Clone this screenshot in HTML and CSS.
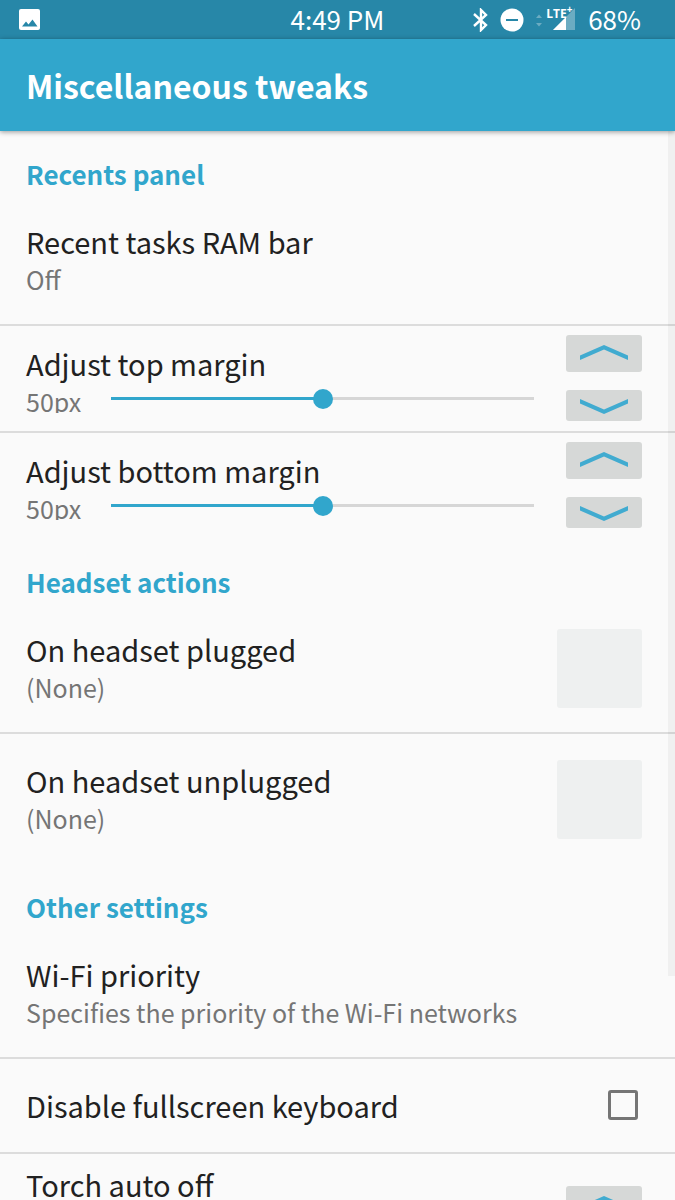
FILE: index.html
```html
<!DOCTYPE html>
<html lang="en">

<head>
  <meta charset="UTF-8">
  <meta name="viewport" content="width=device-width, initial-scale=1">
  <title>Miscellaneous tweaks</title>
  <link rel="stylesheet" href="styles.css">
</head>

<body>
  <div class="status-bar">
    <svg class="icon-picture" width="21" height="21" viewBox="0 0 21 21">
      <rect width="21" height="21" rx="2" fill="#fff"/>
      <path d="M3 17.500L7 12.500L9.500 15.500L13.500 10.500L18.500 17.500Z" fill="#2787a8"/>
    </svg>
    <span class="clock">4:49 PM</span>
    <div class="status-icons">
      <svg width="15" height="24" viewBox="0 0 15 24">
        <path d="M1 6L13 17L8 22V2L13 7L1 18" fill="none" stroke="#fff" stroke-width="2.400"/>
      </svg>
      <svg width="24" height="24" viewBox="0 0 24 24">
        <circle cx="12" cy="12" r="11.500" fill="#fff"/>
        <rect x="6" y="11" width="12" height="2" fill="#2787a8"/>
      </svg>
      <div class="signal">
        <svg width="40" height="24" viewBox="0 0 40 24">
          <path d="M0 10L3 6.500L6 10ZM0 15L3 18.500L6 15Z" fill="#6bacc2"/>
          <path d="M39 0V22H17Z" fill="#6bacc2"/>
          <path d="M30 9V22H17Z" fill="#fff"/>
        </svg>
        <span class="network">LTE<sup>+</sup></span>
      </div>
      <span class="battery">68%</span>
    </div>
  </div>

  <header class="toolbar">
    <h1>Miscellaneous tweaks</h1>
  </header>

  <main class="settings">
    <h2>Recents panel</h2>
    <div class="row">
      <div class="text">
        <div class="title">Recent tasks RAM bar</div>
        <div class="summary">Off</div>
      </div>
    </div>
    <div class="row row-slider">
      <div class="text">
        <label class="title" for="top_margin">Adjust top margin</label>
        <div class="slider">
          <output class="value" for="top_margin">50px</output>
          <input type="range" id="top_margin" min="0" max="100" value="50">
        </div>
      </div>
      <div class="stepper">
        <button class="up" aria-label="Increase top margin"><svg width="48" height="15" viewBox="0 0 48 15"><path d="M0 10.500L24 0L48 10.500V15L24 4.500L0 15Z"/></svg></button>
        <button class="down" aria-label="Decrease top margin"><svg width="48" height="15" viewBox="0 0 48 15"><path d="M0 0L24 10.500L48 0V4.500L24 15L0 4.500Z"/></svg></button>
      </div>
    </div>
    <div class="row row-slider">
      <div class="text">
        <label class="title" for="bottom_margin">Adjust bottom margin</label>
        <div class="slider">
          <output class="value" for="bottom_margin">50px</output>
          <input type="range" id="bottom_margin" min="0" max="100" value="50">
        </div>
      </div>
      <div class="stepper">
        <button class="up" aria-label="Increase bottom margin"><svg width="48" height="15" viewBox="0 0 48 15"><path d="M0 10.500L24 0L48 10.500V15L24 4.500L0 15Z"/></svg></button>
        <button class="down" aria-label="Decrease bottom margin"><svg width="48" height="15" viewBox="0 0 48 15"><path d="M0 0L24 10.500L48 0V4.500L24 15L0 4.500Z"/></svg></button>
      </div>
    </div>

    <h2>Headset actions</h2>
    <div class="row">
      <div class="text">
        <div class="title">On headset plugged</div>
        <div class="summary">(None)</div>
      </div>
      <button class="app-icon" aria-label="Choose action on headset plugged"></button>
    </div>
    <div class="row">
      <div class="text">
        <div class="title">On headset unplugged</div>
        <div class="summary">(None)</div>
      </div>
      <button class="app-icon" aria-label="Choose action on headset unplugged"></button>
    </div>

    <h2>Other settings</h2>
    <div class="row">
      <div class="text">
        <div class="title">Wi-Fi priority</div>
        <div class="summary">Specifies the priority of the Wi-Fi networks</div>
      </div>
    </div>
    <div class="row row-check">
      <label class="title" for="fullscreen_keyboard">Disable fullscreen keyboard</label>
      <input type="checkbox" id="fullscreen_keyboard">
    </div>
    <div class="row row-torch">
      <div class="title">Torch auto off</div>
      <div class="stepper">
        <button class="up" aria-label="Increase torch timeout"><svg width="48" height="15" viewBox="0 0 48 15"><path d="M0 10.500L24 0L48 10.500V15L24 4.500L0 15Z"/></svg></button>
      </div>
    </div>
    <div class="scrollbar"></div>
  </main>
</body>

</html>
```

FILE: styles.css
```css
* {
  box-sizing: border-box;
}

body {
  display: flex;
  flex-direction: column;
  height: 100vh;
  margin: 0;
  overflow: hidden;
  background-color: #fafafa;
  color: #212121;
  font-family: "Noto Sans CJK SC", "Noto Sans", sans-serif;
}

svg {
  display: block;
}

.status-bar {
  display: grid;
  grid-template-columns: 1fr auto 1fr;
  align-items: center;
  flex: none;
  height: 39px;
  padding: 0 19px;
  background-color: #2787a8;
  color: #fff;
  font-size: 26px;
  line-height: 36px;
}

.clock,
.battery {
  padding-bottom: 2px;
}

.status-icons {
  display: flex;
  align-items: center;
  justify-content: flex-end;
  gap: 12px;
  padding-right: 15px;
}

.signal {
  position: relative;
}

.network {
  position: absolute;
  top: 0;
  left: 10px;
  font-family: "Liberation Sans Narrow", "Open Sans", sans-serif;
  font-size: 12px;
  font-weight: 700;
  line-height: 12px;
}

.network sup {
  font-size: 10px;
  line-height: 0;
}

.toolbar {
  flex: none;
  z-index: 1;
  padding: 24px 26px;
  background-color: #31a6cc;
  box-shadow: 0 1px 5px rgba(0, 0, 0, 0.4);
  color: #fff;
}

h1 {
  margin: 0;
  font-size: 32px;
  font-weight: 700;
  line-height: 44px;
}

.settings {
  position: relative;
  flex: 1;
  min-height: 0;
  overflow: hidden;
}

h2 {
  margin: 0;
  padding: 25px 26px 2px;
  color: #31a6cc;
  font-size: 26px;
  font-weight: 700;
  line-height: 38px;
}

h2:first-child {
  padding-top: 24px;
}

.row {
  display: flex;
  align-items: center;
  padding: 27px 33px 26px 26px;
}

.row + .row {
  border-top: 2px solid #dcdcdc;
}

.text {
  flex: 1;
}

.title {
  display: block;
  flex: 1;
  font-size: 29px;
  line-height: 38px;
}

.summary,
.value {
  color: #757575;
  font-size: 25px;
  line-height: 38px;
}

.row-slider {
  align-items: flex-start;
  gap: 32px;
  padding-top: 9px;
  padding-bottom: 10px;
}

.row-slider .text {
  padding-top: 9px;
}

.slider {
  display: flex;
  align-items: center;
  height: 31px;
}

.value {
  flex: none;
  width: 85px;
  height: 31px;
  overflow: hidden;
}

input[type="range"] {
  flex: 1;
  min-width: 0;
  height: 20px;
  margin: 2px 0 0;
  appearance: none;
  background: linear-gradient(to right, #31a6cc 50%, #d6d6d6 50%) center / 100% 3px no-repeat;
}

input[type="range"]::-webkit-slider-thumb {
  width: 20px;
  height: 20px;
  appearance: none;
  border-radius: 50%;
  background-color: #31a6cc;
}

.stepper {
  display: flex;
  flex-direction: column;
  gap: 18px;
}

.stepper button {
  display: flex;
  justify-content: center;
  width: 76px;
  height: 37px;
  padding: 10px 0 0;
  border: none;
  border-radius: 3px;
  background-color: #d6d8d7;
}

.stepper .down {
  height: 31px;
  padding-top: 9px;
}

.stepper path {
  fill: #41abd0;
}

.app-icon {
  width: 85px;
  height: 79px;
  margin: -3px 0;
  border: none;
  border-radius: 3px;
  background-color: #eef0f0;
}

.row-check {
  padding-top: 27px;
  padding-bottom: 28px;
}

input[type="checkbox"] {
  width: 30px;
  height: 30px;
  margin: 0 4px;
  appearance: none;
  border: 3px solid #757575;
  border-radius: 3px;
}

.row-torch {
  align-items: flex-start;
  padding-top: 11px;
}

.row-torch .stepper {
  padding-top: 21px;
}

.scrollbar {
  position: absolute;
  top: 0;
  right: 0;
  width: 7px;
  height: 79%;
  background-color: rgba(0, 0, 0, 0.04);
}
```
